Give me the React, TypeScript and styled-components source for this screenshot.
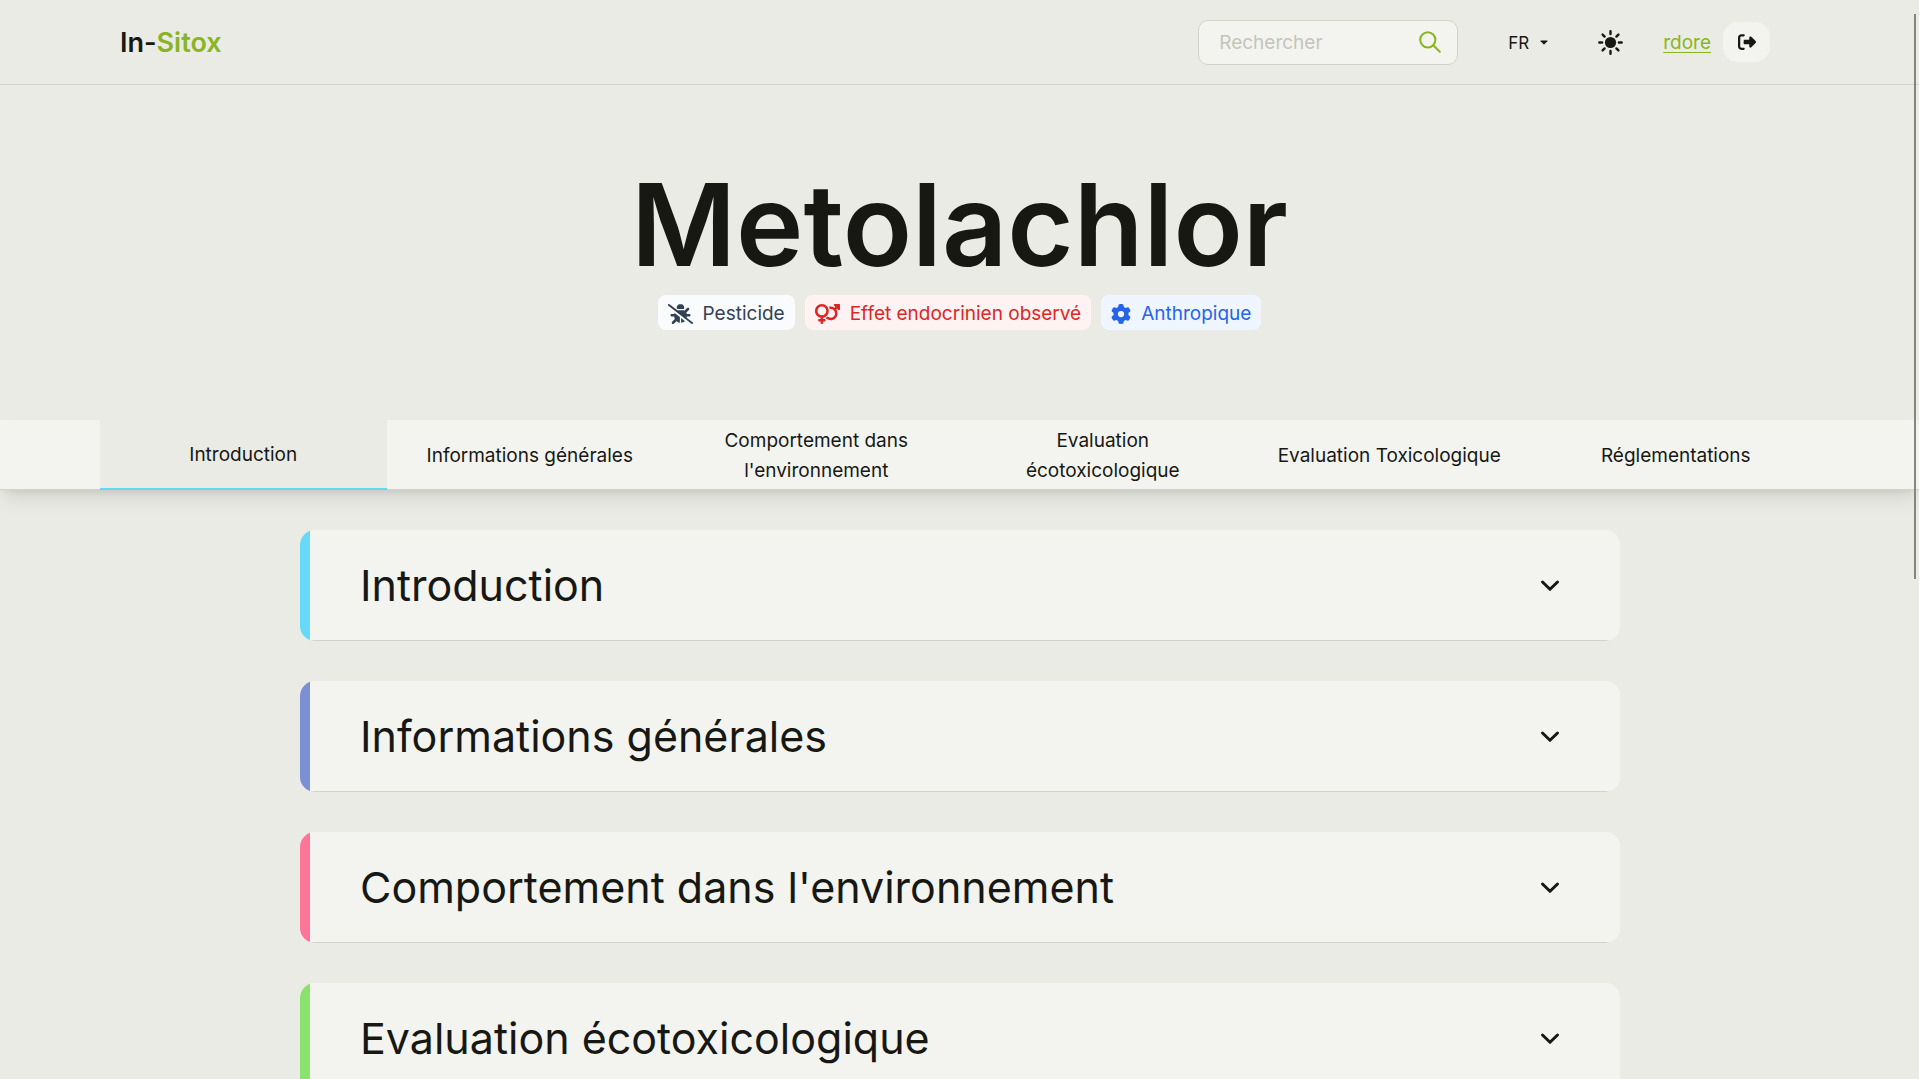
import React from 'react';
import styled, { createGlobalStyle } from 'styled-components';
import { FaBugSlash, FaGear, FaRightFromBracket, FaVenusMars } from 'react-icons/fa6';

const color = {
  page: '#eaebe5',
  panel: '#f3f4ef',
  line: '#d2d4c6',
  ink: '#171814',
  muted: '#c3c5ba',
  brand: '#8ab424',
};

const GlobalStyle = createGlobalStyle`
  *, *::before, *::after { box-sizing: border-box; }
  body {
    margin: 0;
    background: ${color.page};
    color: ${color.ink};
    font-family: Inter, "Liberation Sans", sans-serif;
    font-size: 19px;
    line-height: 30px;
  }
  button, input, select { font: inherit; color: inherit; }
`;

const Page = styled.div`
  height: 100vh;
  overflow-y: auto;
  scrollbar-width: none;
`;

const ScrollThumb = styled.div`
  position: fixed;
  top: 14px;
  right: 3px;
  width: 2px;
  height: 52.4vh;
  background: #858585;
  z-index: 5;
`;

const Header = styled.header`
  display: flex;
  align-items: center;
  justify-content: space-between;
  height: 85px;
  padding: 0 149px 0 120px;
  border-bottom: 1px solid ${color.line};
`;

const Logo = styled.a`
  padding-top: 2px;
  color: ${color.ink};
  font-size: 27px;
  font-weight: 600;
  text-decoration: none;
`;

const LogoAccent = styled.span`
  color: ${color.brand};
`;

const Tools = styled.div`
  display: flex;
  align-items: center;
  gap: 40px;
`;

const SearchForm = styled.form`
  display: flex;
  align-items: center;
  width: 260px;
  height: 45px;
  padding: 0 16px 0 20px;
  background: ${color.panel};
  border: 1px solid ${color.line};
  border-radius: 10px;
`;

const SearchInput = styled.input`
  flex: 1;
  min-width: 0;
  padding: 2px 0 0;
  border: 0;
  outline: 0;
  background: none;
  &::placeholder { color: ${color.muted}; opacity: 1; }
`;

const IconButton = styled.button`
  display: flex;
  padding: 0;
  border: 0;
  background: none;
  cursor: pointer;
`;

const SearchButton = styled(IconButton)`
  color: ${color.brand};
`;

const Language = styled.div`
  display: flex;
  align-items: center;
  gap: 8px;
  padding: 0 10px;
`;

const LanguageSelect = styled.select`
  appearance: none;
  padding: 2px 0 0;
  border: 0;
  background: none;
  font-size: 17px;
`;

const Account = styled.div`
  display: flex;
  align-items: center;
  gap: 12px;
`;

const AccountLink = styled.a`
  padding-top: 2px;
  color: ${color.brand};
  text-underline-offset: 3px;
`;

const LogoutButton = styled(IconButton)`
  align-items: center;
  justify-content: center;
  width: 47px;
  height: 40px;
  background: ${color.panel};
  border-radius: 15px;
`;

const Hero = styled.section`
  display: flex;
  flex-direction: column;
  align-items: center;
  padding: 70px 20px 90px;
`;

const Title = styled.h1`
  margin: 0;
  font-size: 114px;
  font-weight: 600;
  line-height: 140px;
`;

const Badges = styled.div`
  display: flex;
  gap: 10px;
`;

const Badge = styled.span<{ $bg: string; $fg: string; $iconWidth: number }>`
  display: flex;
  align-items: center;
  gap: 10px;
  height: 35px;
  padding: 2px 10px 0;
  border-radius: 8px;
  background: ${(p) => p.$bg};
  color: ${(p) => p.$fg};
  svg { width: ${(p) => p.$iconWidth}px; height: 20px; }
`;

const TabBar = styled.nav`
  display: grid;
  grid-template-columns: repeat(6, 1fr);
  height: 70px;
  padding: 0 100px;
  background: ${color.panel};
  border-bottom: 1px solid ${color.line};
  box-shadow: 0 12px 20px -4px rgba(0, 0, 0, 0.1), 0 5px 8px -5px rgba(0, 0, 0, 0.1);
`;

const Tab = styled.a<{ $active: boolean }>`
  display: flex;
  align-items: center;
  justify-content: center;
  height: 70px;
  padding: 2px 24px 0;
  color: ${color.ink};
  text-align: center;
  text-decoration: none;
  background: ${(p) => (p.$active ? color.page : 'transparent')};
  border-bottom: ${(p) => (p.$active ? '2px solid #65d7f3' : '0')};
`;

const Sections = styled.main`
  display: flex;
  flex-direction: column;
  gap: 40px;
  padding: 40px 299px 40px 300px;
`;

const Section = styled.h2<{ $accent: string }>`
  flex: none;
  margin: 0;
  padding-left: 10px;
  overflow: hidden;
  border-radius: 15px;
  background: linear-gradient(to right, ${(p) => p.$accent} 10px, ${color.panel} 10px);
  font-size: 43px;
  font-weight: 400;
  line-height: 60px;
`;

const SectionToggle = styled.button`
  display: flex;
  align-items: center;
  justify-content: space-between;
  width: 100%;
  padding: 25px 60px 25px 50px;
  border: 0;
  border-bottom: 1px solid ${color.line};
  background: ${color.panel};
  text-align: left;
  cursor: pointer;
`;

const SearchIcon = () => (
  <svg width="22" height="22" viewBox="0 0 22 22" fill="none" stroke="currentColor" strokeWidth="2" strokeLinecap="round">
    <circle cx="8.8" cy="8.8" r="7.6" />
    <path d="M14.3 14.3 20.8 20.8" />
  </svg>
);

const CaretIcon = () => (
  <svg width="8" height="5" viewBox="0 0 8 5" fill="currentColor">
    <path d="M1 0.5h6a.5.5 0 0 1 .4.8L4.4 4.3a.6.6 0 0 1-.8 0L.6 1.3A.5.5 0 0 1 1 .5Z" />
  </svg>
);

const SunIcon = () => (
  <svg width="25" height="25" viewBox="0 0 25 25" stroke="currentColor" strokeWidth="2.4" strokeLinecap="round">
    <circle cx="12.5" cy="12.5" r="5.6" fill="currentColor" stroke="none" />
    <path d="M12.5 1.3v2.8M12.5 20.9v2.8M1.3 12.5h2.8M20.9 12.5h2.8M4.6 4.6l2 2M18.4 18.4l2 2M4.6 20.4l2-2M18.4 6.6l2-2" />
  </svg>
);

const ChevronIcon = () => (
  <svg width="20" height="14" viewBox="0 0 20 14" fill="none" stroke="currentColor" strokeWidth="3" strokeLinecap="round" strokeLinejoin="round">
    <path d="M2.5 4 10 11.3 17.5 4" />
  </svg>
);

const badges = [
  { label: 'Pesticide', Icon: FaBugSlash, iconWidth: 25, bg: '#f9fbfd', fg: '#334155' },
  { label: 'Effet endocrinien observé', Icon: FaVenusMars, iconWidth: 25, bg: '#fef2f2', fg: '#dc2626' },
  { label: 'Anthropique', Icon: FaGear, iconWidth: 20, bg: '#eff6ff', fg: '#2563eb' },
];

const tabs = [
  'Introduction',
  'Informations générales',
  "Comportement dans l'environnement",
  'Evaluation écotoxicologique',
  'Evaluation Toxicologique',
  'Réglementations',
];

const sections = [
  { title: 'Introduction', accent: '#65d9f7' },
  { title: 'Informations générales', accent: '#7b90d2' },
  { title: "Comportement dans l'environnement", accent: '#ff7598' },
  { title: 'Evaluation écotoxicologique', accent: '#8ae16b' },
];

export default function App() {
  return (
    <Page>
      <GlobalStyle />
      <Header>
        <Logo href="#">
          In-<LogoAccent>Sitox</LogoAccent>
        </Logo>
        <Tools>
          <SearchForm role="search" onSubmit={(e) => e.preventDefault()}>
            <SearchInput type="text" placeholder="Rechercher" aria-label="Rechercher" />
            <SearchButton type="submit" aria-label="Rechercher">
              <SearchIcon />
            </SearchButton>
          </SearchForm>
          <Language>
            <LanguageSelect aria-label="Langue" defaultValue="FR">
              <option>FR</option>
              <option>EN</option>
            </LanguageSelect>
            <CaretIcon />
          </Language>
          <IconButton type="button" aria-label="Thème">
            <SunIcon />
          </IconButton>
          <Account>
            <AccountLink href="#">rdore</AccountLink>
            <LogoutButton type="button" aria-label="Déconnexion">
              <FaRightFromBracket size={18} />
            </LogoutButton>
          </Account>
        </Tools>
      </Header>
      <Hero>
        <Title>Metolachlor</Title>
        <Badges>
          {badges.map(({ label, Icon, iconWidth, bg, fg }) => (
            <Badge key={label} $bg={bg} $fg={fg} $iconWidth={iconWidth}>
              <Icon />
              {label}
            </Badge>
          ))}
        </Badges>
      </Hero>
      <TabBar>
        {tabs.map((tab, i) => (
          <Tab key={tab} href="#" $active={i === 0}>
            {tab}
          </Tab>
        ))}
      </TabBar>
      <Sections>
        {sections.map(({ title, accent }) => (
          <Section key={title} $accent={accent}>
            <SectionToggle type="button" aria-expanded={false}>
              {title}
              <ChevronIcon />
            </SectionToggle>
          </Section>
        ))}
      </Sections>
      <ScrollThumb />
    </Page>
  );
}
